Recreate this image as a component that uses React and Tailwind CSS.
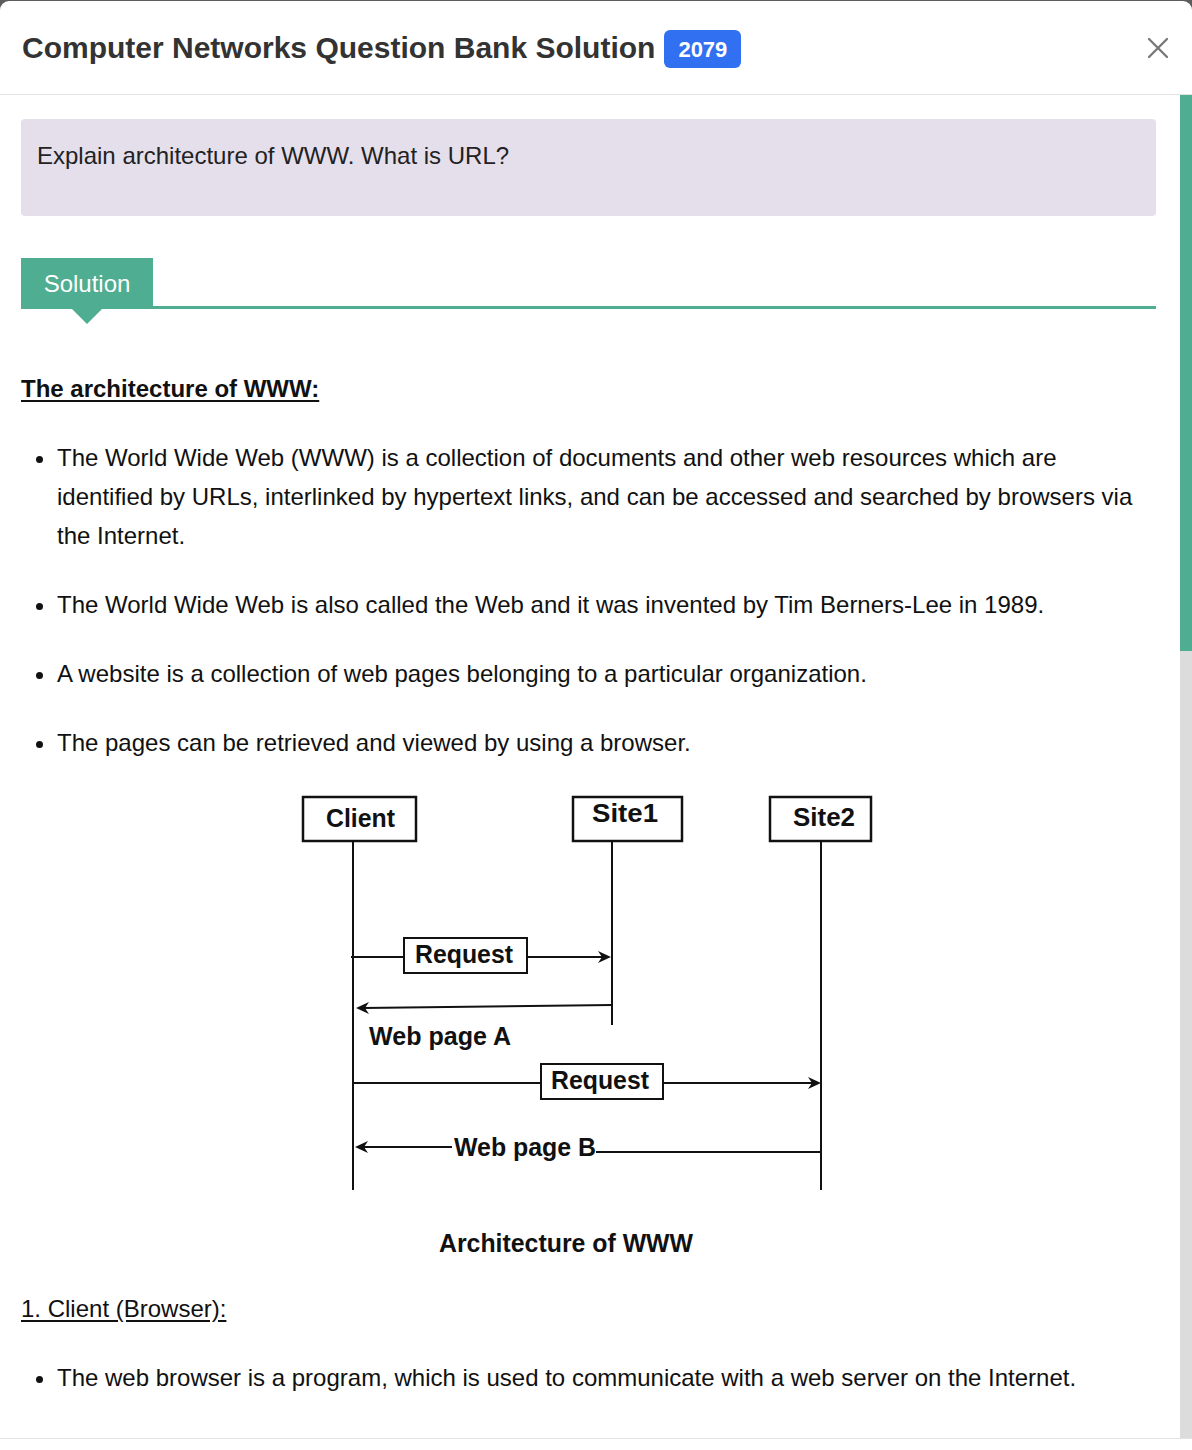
import { X } from 'lucide-react'

const bullets = [
  'The World Wide Web (WWW) is a collection of documents and other web resources which are identified by URLs, interlinked by hypertext links, and can be accessed and searched by browsers via the Internet.',
  'The World Wide Web is also called the Web and it was invented by Tim Berners-Lee in 1989.',
  'A website is a collection of web pages belonging to a particular organization.',
  'The pages can be retrieved and viewed by using a browser.',
]

function ArrowHead({ x, y, dir }) {
  // small filled chevron head, pointing left or right
  const d = dir === 'right'
    ? `M${x} ${y} L${x - 13} ${y - 6} L${x - 9} ${y} L${x - 13} ${y + 6} Z`
    : `M${x} ${y} L${x + 13} ${y - 6} L${x + 9} ${y} L${x + 13} ${y + 6} Z`
  return <path d={d} fill="#111" />
}

function WwwDiagram() {
  const label = { fontFamily: "'Liberation Sans', Arial, sans-serif", fontWeight: 700, fill: '#111' }
  return (
    <svg width="600" height="480" viewBox="0 0 600 480" className="mx-auto mt-[23px] block">
      <g stroke="#111" fill="none">
        <rect x="14" y="12" width="113" height="44" strokeWidth="2.5" />
        <rect x="284" y="12" width="109" height="44" strokeWidth="2.5" />
        <rect x="481" y="12" width="101" height="44" strokeWidth="2.5" />
        <line x1="64" y1="56" x2="64" y2="405" strokeWidth="2" />
        <line x1="323" y1="56" x2="323" y2="240" strokeWidth="2" />
        <line x1="532" y1="56" x2="532" y2="405" strokeWidth="2" />

        <rect x="115" y="153" width="123" height="35" strokeWidth="2" />
        <line x1="62" y1="172" x2="115" y2="172" strokeWidth="2" />
        <line x1="238" y1="172" x2="315" y2="172" strokeWidth="2" />
        <line x1="323" y1="220" x2="74" y2="223" strokeWidth="2" />

        <rect x="252" y="279" width="122" height="35" strokeWidth="2" />
        <line x1="64" y1="298" x2="252" y2="298" strokeWidth="2" />
        <line x1="374" y1="298" x2="526" y2="298" strokeWidth="2" />

        <line x1="74" y1="362" x2="163" y2="362" strokeWidth="2" />
        <line x1="307" y1="367" x2="532" y2="367" strokeWidth="2" />
      </g>
      <ArrowHead x={322} y={172} dir="right" />
      <ArrowHead x={67} y={223} dir="left" />
      <ArrowHead x={532} y={298} dir="right" />
      <ArrowHead x={66} y={362} dir="left" />

      <text x="37" y="42" fontSize="26" textLength="69" lengthAdjust="spacingAndGlyphs" style={label}>Client</text>
      <text x="303" y="37" fontSize="26" textLength="66" lengthAdjust="spacingAndGlyphs" style={label}>Site1</text>
      <text x="504" y="41" fontSize="26" textLength="62" lengthAdjust="spacingAndGlyphs" style={label}>Site2</text>
      <text x="126" y="178" fontSize="25" textLength="98" lengthAdjust="spacingAndGlyphs" style={label}>Request</text>
      <text x="80" y="260" fontSize="25" textLength="142" lengthAdjust="spacingAndGlyphs" style={label}>Web page A</text>
      <text x="262" y="304" fontSize="25" textLength="98" lengthAdjust="spacingAndGlyphs" style={label}>Request</text>
      <text x="165" y="371" fontSize="25" textLength="142" lengthAdjust="spacingAndGlyphs" style={label}>Web page B</text>
      <text x="150" y="467" fontSize="25" textLength="254" lengthAdjust="spacingAndGlyphs" style={label}>Architecture of WWW</text>
    </svg>
  )
}

export default function App() {
  return (
    <div className="h-[1450px] bg-[#5c5c5c] pt-px font-['Liberation_Sans',Arial,sans-serif]">
      <div className="flex h-[1449px] flex-col overflow-hidden rounded-t-[9px] bg-white">
        {/* header */}
        <div className="flex h-[94px] shrink-0 items-center justify-between border-b border-[#e2e2e2] pl-[22px] pr-[16px]">
          <div className="flex items-center gap-[9px]">
            <h1 className="text-[30px] font-bold text-[#333]">Computer Networks Question Bank Solution</h1>
            <span className="mt-[3px] flex h-[38px] items-center rounded-[6px] bg-[#3170f0] px-[14px] text-[22px] font-bold text-white">
              2079
            </span>
          </div>
          <X className="h-[36px] w-[36px] text-[#777]" strokeWidth={1.5} />
        </div>

        {/* body */}
        <div className="flex min-h-0 flex-1">
          <div className="min-w-0 flex-1 overflow-hidden pl-[21px] pr-[24px] pt-[24px] text-[#111]">
            <div className="h-[97px] rounded-[4px] bg-[#e5dfec] px-4 pt-[20px] text-[24px] leading-[33px] text-[#222]">
              Explain architecture of WWW. What is URL?
            </div>

            <div className="mt-[42px] flex border-b-[3px] border-[#4fad91]">
              <div className="relative flex h-[48px] w-[132px] items-center justify-center bg-[#4fad91] pt-[3px] text-[24px] text-white">
                Solution
                <span className="absolute left-[51px] top-[51px] h-0 w-0 border-x-[15px] border-t-[15px] border-x-transparent border-t-[#4fad91]" />
              </div>
            </div>

            <h2 className="mt-[63px] text-[24px] font-bold leading-[33px] underline underline-offset-[3px]">
              The architecture of WWW:
            </h2>

            <ul className="mt-[33px] list-disc space-y-[30px] pl-9 text-[24px] leading-[39px]">
              {bullets.map((b) => (
                <li key={b}>{b}</li>
              ))}
            </ul>

            <WwwDiagram />

            <p className="mt-[27px] text-[24px] leading-[33px] underline underline-offset-[3px]">1. Client (Browser):</p>

            <ul className="mt-[33px] list-disc pl-9 text-[24px] leading-[39px]">
              <li>The web browser is a program, which is used to communicate with a web server on the Internet.</li>
            </ul>
          </div>

          {/* scrollbar */}
          <div className="w-[12px] shrink-0 bg-[#dcdcdc]">
            <div className="h-[556px] bg-[#4fad91]" />
          </div>
        </div>

        <div className="h-[12px] shrink-0 border-t border-[#e2e2e2]" />
      </div>
    </div>
  )
}
